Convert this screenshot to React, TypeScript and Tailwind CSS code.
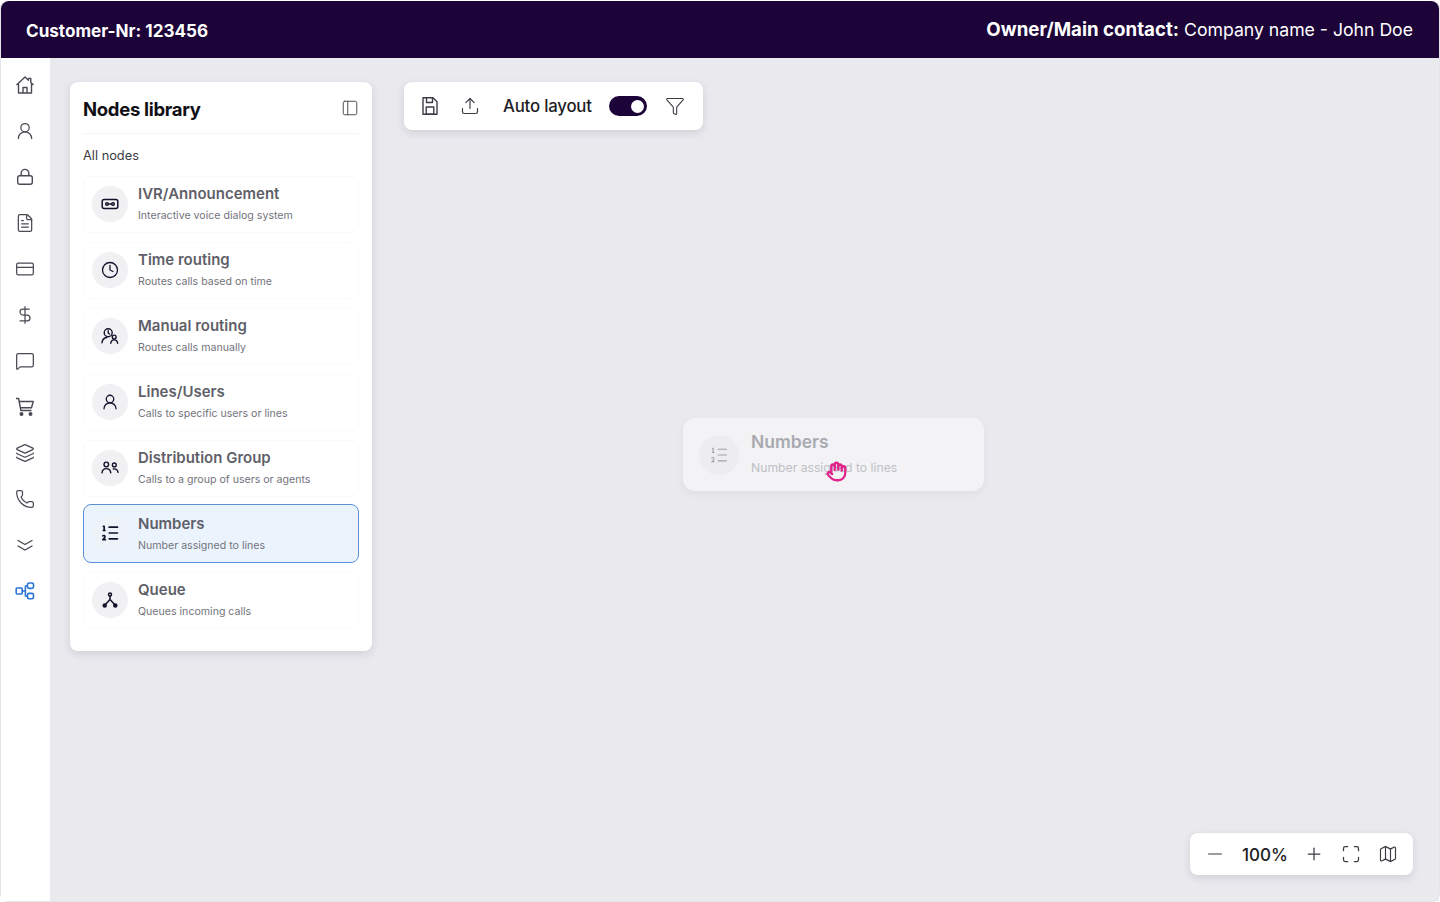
import {
  Clock, CreditCard, DollarSign, FileText, Funnel, Hand, ListOrdered, Map as MapIcon,
  Maximize, MessageSquare, Minus, PanelLeft, Phone, Plus, Upload, UserRound, Layers,
} from "lucide-react";

function HomeIcon() {
  return (
    <svg width="20" height="20" viewBox="0 0 20 20" fill="none" stroke="currentColor" strokeWidth="1.4" strokeLinejoin="round">
      <path d="M1.500 10 10 2l3.500 3.300V3.400h2.300v4.100L18.500 10" />
      <path d="M3.500 8.400V18h13V8.400" />
      <path d="M8 18v-5.500h4V18" />
    </svg>
  );
}

function LockIcon() {
  return (
    <svg width="18" height="18" viewBox="0 0 18 18" fill="none" stroke="currentColor" strokeWidth="1.4">
      <rect x="1.700" y="7.700" width="14.600" height="8.600" rx="2" />
      <path d="M5.200 7.700V5.200a3.800 3.800 0 0 1 7.600 0v2.500" />
    </svg>
  );
}

function CartIcon() {
  return (
    <svg width="20" height="20" viewBox="0 0 20 20" fill="none" stroke="currentColor" strokeWidth="1.4" strokeLinejoin="round">
      <path d="M1 1.500h2.600l2.300 12h10.600" />
      <path d="M4 4.500h14.200l-1.700 6.300H5.400" />
      <circle cx="6.500" cy="17" r="1.300" fill="currentColor" />
      <circle cx="15.500" cy="17" r="1.300" fill="currentColor" />
    </svg>
  );
}

function DoubleChevron() {
  return (
    <svg width="20" height="20" viewBox="0 0 20 20" fill="none" stroke="currentColor" strokeWidth="1.4" strokeLinecap="round" strokeLinejoin="round">
      <path d="M3 5.500 10 9.500l7-4" />
      <path d="M3 11 10 15l7-4" />
    </svg>
  );
}

function FlowIcon() {
  return (
    <svg width="20" height="20" viewBox="0 0 20 20" fill="none" stroke="#2b74d8" strokeWidth="1.600">
      <rect x="1.200" y="7" width="6" height="6" rx="1" />
      <rect x="12.500" y="2" width="6" height="5.400" rx="1.600" />
      <rect x="12.500" y="12.400" width="6" height="5.400" rx="1.600" />
      <path d="M7.200 10h3.200M10.400 4.800h2.100M10.400 15.200h2.100M10.400 4.800v10.400" />
    </svg>
  );
}

function IvrIcon() {
  return (
    <svg width="18" height="18" viewBox="0 0 18 18" fill="none" stroke="#14112b" strokeWidth="1.500">
      <rect x="1.200" y="4.600" width="15.600" height="8.800" rx="2" />
      <circle cx="6" cy="9" r="1.300" />
      <circle cx="12" cy="9" r="1.300" />
      <path d="M7.300 9h3.400" />
    </svg>
  );
}

function ManualIcon() {
  return (
    <svg width="18" height="18" viewBox="0 0 18 18" fill="none" stroke="#14112b" strokeWidth="1.400" strokeLinecap="round">
      <circle cx="7.200" cy="5.800" r="4" />
      <path d="M7.200 3.800v2.200l1.400 1" />
      <path d="M1 15.800c.3-3 2.300-5 4.800-5.300" />
      <circle cx="13.200" cy="10" r="1.900" />
      <path d="M9.800 16.200c.2-2 1.600-3.300 3.400-3.300s3.200 1.300 3.400 3.300" />
    </svg>
  );
}

function GroupIcon() {
  return (
    <svg width="18" height="18" viewBox="0 0 18 18" fill="none" stroke="#14112b" strokeWidth="1.400" strokeLinecap="round">
      <circle cx="5.300" cy="5.400" r="2.300" />
      <circle cx="13.300" cy="5.900" r="1.900" />
      <path d="M1 13.900c.3-2.800 2-4.300 4.300-4.300s4.200 1.500 4.500 4.300" />
      <path d="M12.300 10c2.500-.4 4.300 1 4.700 3.400" />
    </svg>
  );
}

function QueueIcon() {
  return (
    <svg width="18" height="18" viewBox="0 0 18 18" fill="none" stroke="#14112b" strokeWidth="1.500">
      <circle cx="9" cy="3.400" r="1.500" />
      <circle cx="3.700" cy="14.400" r="1.500" fill="#14112b" />
      <circle cx="14.300" cy="14.400" r="1.500" fill="#14112b" />
      <path d="M9 5v3.500M9 8.500l-4.400 4.700M9 8.500l4.400 4.700" />
    </svg>
  );
}

function SaveIcon() {
  return (
    <svg width="20" height="20" viewBox="0 0 20 20" fill="none" stroke="currentColor" strokeWidth="1.400" strokeLinejoin="round">
      <path d="M3 1.700h10l4 4v12.600H3z" />
      <path d="M6.500 1.700v4.800h6V1.700" />
      <rect x="6.200" y="11" width="7.600" height="7.300" />
    </svg>
  );
}

const sideIcons = [
  <HomeIcon />,
  <UserRound size={20} strokeWidth={1.5} />,
  <LockIcon />,
  <FileText size={20} strokeWidth={1.5} />,
  <CreditCard size={20} strokeWidth={1.5} />,
  <DollarSign size={20} strokeWidth={1.5} />,
  <MessageSquare size={20} strokeWidth={1.5} />,
  <CartIcon />,
  <Layers size={20} strokeWidth={1.5} />,
  <Phone size={20} strokeWidth={1.5} />,
  <DoubleChevron />,
  <FlowIcon />,
];

const nodes = [
  { title: "IVR/Announcement", sub: "Interactive voice dialog system", icon: <IvrIcon /> },
  { title: "Time routing", sub: "Routes calls based on time", icon: <Clock size={18} strokeWidth={1.7} color="#14112b" /> },
  { title: "Manual routing", sub: "Routes calls manually", icon: <ManualIcon /> },
  { title: "Lines/Users", sub: "Calls to specific users or lines", icon: <UserRound size={18} strokeWidth={1.7} color="#14112b" /> },
  { title: "Distribution Group", sub: "Calls to a group of users or agents", icon: <GroupIcon /> },
  { title: "Numbers", sub: "Number assigned to lines", icon: <ListOrdered size={20} strokeWidth={2} color="#14112b" />, active: true },
  { title: "Queue", sub: "Queues incoming calls", icon: <QueueIcon /> },
];

function NodeRow({ title, sub, icon, active }: { title: string; sub: string; icon: React.ReactNode; active?: boolean }) {
  return (
    <div
      className={
        active
          ? "-mt-[2px] flex h-[59px] items-center gap-[10px] rounded-lg border border-[#5b92d6] bg-[#ebf3fc] pl-[8px]"
          : "flex h-[57px] items-center gap-[10px] rounded-lg border border-[#fafafb] bg-white pl-[8px]"
      }
    >
      <div className={active ? "-mt-px flex h-9 w-9 shrink-0 items-center justify-center rounded-full bg-[#eef3f9]" : "-mt-[2px] flex h-9 w-9 shrink-0 items-center justify-center rounded-full bg-[#f1f1f4]"}>
        {icon}
      </div>
      <div className={active ? "min-w-0 pt-[2px]" : "min-w-0"}>
        <div className="-mt-px text-[15px] leading-[20px] font-semibold text-[#5f5f69]">{title}</div>
        <div className="mt-[4px] text-[10.600px] leading-[16px] text-[#73737c]">{sub}</div>
      </div>
    </div>
  );
}

export default function App() {
  return (
    <div className="h-[902px] w-[1440px] overflow-hidden bg-white font-['Inter',sans-serif]">
      <div className="flex h-[902px] flex-col rounded-lg border border-t-0 border-[#e4e4ea]">
        <header className="mt-px flex h-[57px] shrink-0 items-center justify-between rounded-t-lg bg-[#1c0338] pt-[2px] pr-[26px] pl-[25px] text-white">
          <div className="text-[17.100px] font-bold">Customer-Nr: 123456</div>
          <div className="text-[17.650px]">
            <span className="text-[18.700px] font-bold">Owner/Main contact:</span> Company name - John Doe
          </div>
        </header>
        <div className="flex min-h-0 flex-1">
          <aside className="flex w-[49px] shrink-0 flex-col items-center gap-[26px] bg-white pt-[17px] pr-[2px] text-[#4a4a54]">
            {sideIcons.map((icon, i) => (
              <div key={i} className="flex h-5 w-5 items-center justify-center">
                {icon}
              </div>
            ))}
          </aside>
          <main className="relative flex flex-1 items-start gap-[32px] bg-[#e9e9ee] pt-[24px] pl-[20px]">
            <section className="flex h-[569px] w-[302px] flex-col rounded-lg bg-white px-[13px] shadow-[0_3px_8px_rgba(30,30,60,0.12)]">
              <div className="flex h-[52px] items-center justify-between border-b border-[#f5f5f7] pt-[4px]">
                <h2 className="text-[18.500px] font-bold tracking-[-0.3px] text-[#101014]">Nodes library</h2>
                <PanelLeft size={18} strokeWidth={1.3} color="#4a4a54" className="-mt-[4px]" />
              </div>
              <div className="mt-[13px] mb-[11px] text-[12.800px] leading-[18px] text-[#3c3c44]">All nodes</div>
              <div className="flex flex-col gap-[9px]">
                {nodes.map((n) => (
                  <NodeRow key={n.title} {...n} />
                ))}
              </div>
            </section>
            <div className="flex h-[48px] w-[299px] items-center rounded-lg bg-white pl-[16px] text-[#3c3c44] shadow-[0_3px_8px_rgba(30,30,60,0.12)]">
              <SaveIcon />
              <Upload size={20} strokeWidth={1.4} className="ml-[20px]" />
              <span className="ml-[23px] pt-[2px] text-[16.800px] font-medium tracking-[-0.2px] text-[#1d1d24]">Auto layout</span>
              <div className="ml-[17px] flex h-5 w-[38px] items-center justify-end rounded-full bg-[#1c0338] pr-[3px]">
                <div className="h-[13px] w-[13px] rounded-full bg-white" />
              </div>
              <Funnel size={20} strokeWidth={1.3} className="ml-[18px]" />
            </div>
            <div className="absolute top-[360px] left-[633px] flex h-[73px] w-[301px] items-center gap-[12px] rounded-xl bg-[#f3f3f6] pl-[16px] shadow-[0_3px_8px_rgba(30,30,60,0.05)]">
              <div className="flex h-10 w-10 items-center justify-center rounded-full bg-[#ededf0]">
                <ListOrdered size={20} strokeWidth={1.3} color="#a0a0a8" />
              </div>
              <div>
                <div className="-mt-px text-[17.500px] leading-[22px] font-semibold text-[#a9a9b0]">Numbers</div>
                <div className="mt-[6px] text-[12.200px] leading-[18px] text-[#c0c0c6]">Number assigned to lines</div>
              </div>
            </div>
            <Hand size={21} strokeWidth={2.600} color="#e0248c" className="absolute top-[403px] left-[776px]" />
            <div className="absolute right-[26px] bottom-[26px] flex h-[42px] w-[223px] items-center rounded-lg bg-white pl-[14px] text-[#3c3c44] shadow-[0_3px_8px_rgba(30,30,60,0.12)]">
              <Minus size={22} strokeWidth={1.300} />
              <span className="ml-[16px] pt-[3px] text-[17px] font-medium text-[#1d1d24]">100%</span>
              <Plus size={20} strokeWidth={1.500} className="ml-[16px]" />
              <Maximize size={20} strokeWidth={1.500} className="ml-[17px]" />
              <MapIcon size={20} strokeWidth={1.400} className="ml-[17px]" />
            </div>
          </main>
        </div>
      </div>
    </div>
  );
}
